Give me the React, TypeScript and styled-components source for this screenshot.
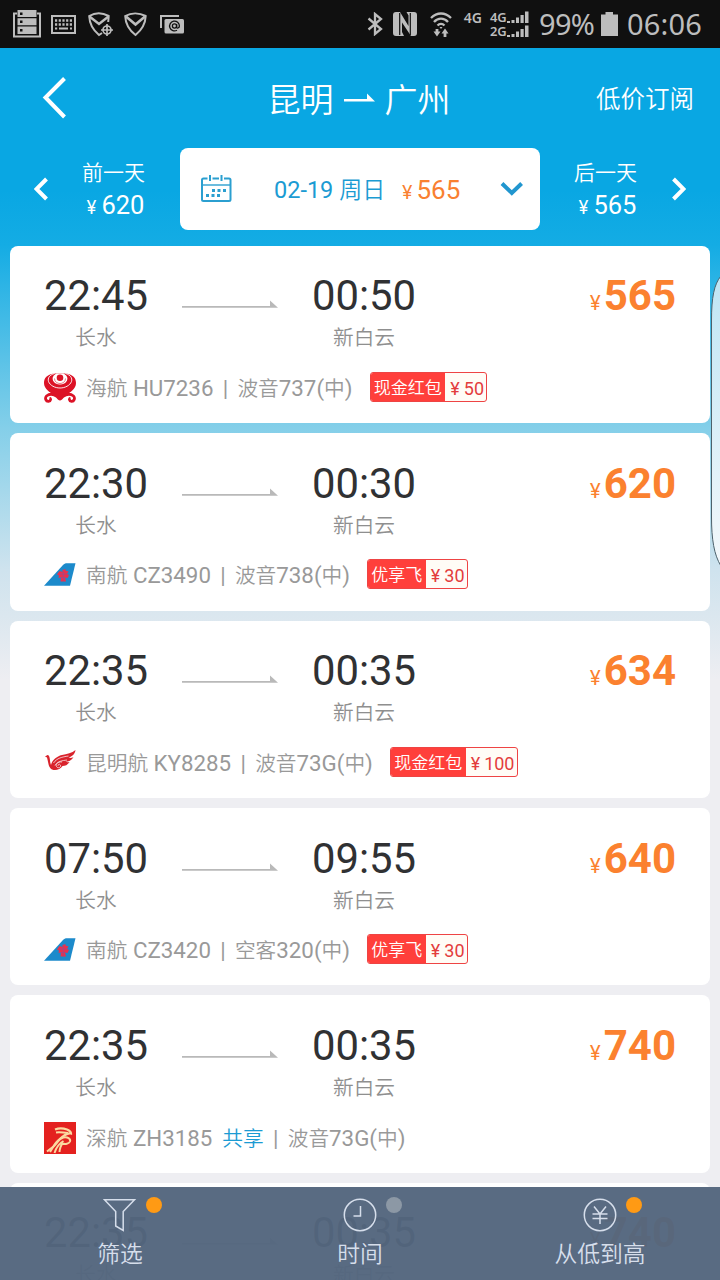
import React from "react";
import styled, { createGlobalStyle } from "styled-components";

const GlobalStyle = createGlobalStyle`
  * { box-sizing: border-box; }
  body {
    margin: 0;
    background: #eeeef2;
    font-family: Roboto, "Noto Sans CJK SC", sans-serif;
  }
  svg { display: block; flex: none; }
`;

const Screen = styled.div`
  position: relative;
  width: 720px;
  height: 1280px;
  overflow: hidden;
  display: flex;
  flex-direction: column;
  background: linear-gradient(
    180deg,
    #09a7e3 0,
    #09a7e3 190px,
    #14ace4 245px,
    #84cfe9 428px,
    #cfe3ee 570px,
    #dbe7ef 616px,
    #eeeef2 680px,
    #eeeef2 100%
  );
`;

const StatusBar = styled.header`
  flex: none;
  height: 48px;
  padding: 0 18px 0 13px;
  display: flex;
  align-items: center;
  justify-content: space-between;
  background: #101010;
  color: #bdbdbd;
`;

const StatusGroup = styled.div`
  display: flex;
  align-items: center;
`;

const StatusIcon = styled.svg<{ $gap?: number }>`
  margin-left: ${(p) => p.$gap ?? 0}px;
`;

const StatusText = styled.span<{ $gap: number; $width: number; $spacing: number }>`
  margin-left: ${(p) => p.$gap}px;
  width: ${(p) => p.$width}px;
  font: 400 29px/50px "Noto Sans", sans-serif;
  letter-spacing: ${(p) => p.$spacing}px;
  white-space: nowrap;
`;

const NetworkLabel = styled.span<{ $gap: number }>`
  margin-left: ${(p) => p.$gap}px;
  font: 600 14px/15px "Noto Sans", sans-serif;
  padding-bottom: 13px;
`;

const DualSim = styled.div`
  margin-left: 8px;
  width: 40px;
  display: flex;
  flex-direction: column;
`;

const SimRow = styled.div`
  height: 14px;
  display: flex;
  align-items: center;
  gap: 1px;
  font: 600 13px/14px "Noto Sans", sans-serif;
  letter-spacing: -0.3px;
`;

const TitleBar = styled.div`
  flex: none;
  height: 100px;
  display: grid;
  grid-template-columns: 200px 1fr 200px;
  align-items: center;
  color: #fff;
`;

const BackButton = styled.div`
  padding-left: 42px;
`;

const Route = styled.h1`
  margin: 0 2px 0 0;
  padding: 6px 0 0;
  display: flex;
  align-items: center;
  justify-content: center;
  gap: 10px;
  font-size: 33px;
  line-height: 48px;
  font-weight: 350;

  svg {
    margin-top: -6px;
  }
`;

const Subscribe = styled.span`
  padding: 4px 26px 0 0;
  text-align: right;
  font-size: 24.5px;
  line-height: 40px;
  font-weight: 350;
`;

const DateBar = styled.div`
  flex: none;
  height: 82px;
  display: grid;
  grid-template-columns: 180px 360px 180px;
  color: #fff;
`;

const DayLink = styled.div<{ $side: "prev" | "next" }>`
  display: flex;
  align-items: center;
  justify-content: space-between;
  padding: ${(p) => (p.$side === "prev" ? "0 35px 0 34px" : "0 34px 0 34px")};
`;

const DayInfo = styled.div`
  display: flex;
  flex-direction: column;
  align-items: center;
  padding-top: 3px;
`;

const DayName = styled.span`
  font-size: 21px;
  line-height: 31px;
  font-weight: 350;
`;

const DayPrice = styled.span`
  padding-left: 4px;
  display: flex;
  align-items: baseline;
  gap: 5px;
  font-size: 25.5px;
  line-height: 33px;
`;

const Yen = styled.span<{ $size: number }>`
  font-family: Inter, sans-serif;
  font-weight: 400;
  font-size: ${(p) => p.$size}px;
`;

const DateBox = styled.div`
  display: flex;
  align-items: center;
  padding: 0 16px 0 20px;
  border-radius: 8px;
  background: #fff;
`;

const DateText = styled.span`
  margin-left: 42px;
  padding-top: 2px;
  width: 128px;
  font-size: 23.5px;
  line-height: 36px;
  color: #1b9bd3;
  white-space: nowrap;
`;

const DateHan = styled.span`
  font-size: 23px;
  font-weight: 350;
`;

const DatePrice = styled.span`
  display: flex;
  align-items: baseline;
  gap: 4px;
  width: 98px;
  padding-top: 4px;
  font-size: 26px;
  line-height: 36px;
  color: #f98031;
`;

const FlightList = styled.main`
  flex: none;
  padding: 15.9px 10px 0;
  display: flex;
  flex-direction: column;
  gap: 10px;
`;

const FlightCard = styled.article`
  height: 177.4px;
  padding: 25.6px 34px 0;
  border-radius: 8px;
  background: #fff;
`;

const Schedule = styled.div`
  display: flex;
  align-items: flex-start;
`;

const Stop = styled.div`
  width: 104px;
  display: flex;
  flex-direction: column;
  align-items: center;
`;

const StopTime = styled.span`
  font-size: 41.8px;
  line-height: 50px;
  color: #303133;
`;

const StopName = styled.span`
  margin-top: 3px;
  font-size: 20.7px;
  line-height: 28px;
  font-weight: 350;
  color: #8f8f8f;
`;

const FlightArrow = styled.svg`
  margin: 28px 34px 0;
`;

const Fare = styled.div`
  margin-left: auto;
  display: flex;
  align-items: baseline;
  gap: 3px;
  font-size: 42px;
  font-weight: 700;
  line-height: 50px;
  color: #fb812f;
`;

const Carrier = styled.div`
  margin-top: 19.6px;
  height: 32px;
  display: flex;
  align-items: center;
`;

const CarrierText = styled.span`
  margin-left: 10px;
  padding-top: 1px;
  font-size: 22.3px;
  line-height: 32px;
  color: #999;
  font-weight: 400;
  white-space: pre;
`;

const Han = styled.span`
  font-size: 20.7px;
  font-weight: 350;
`;

const Shared = styled.span`
  margin-left: 10px;
  font-size: 20.7px;
  font-weight: 350;
  color: #1b9bd3;
`;

const Divider = styled.span`
  display: inline-block;
  width: 24px;
  text-align: center;
`;

const Promo = styled.div`
  margin: -2px 0 0 17.3px;
  height: 30px;
  display: flex;
  border: 1px solid #ee4444;
  border-radius: 3px;
  overflow: hidden;
  background: #fffcf6;
`;

const PromoName = styled.span`
  padding: 0 3.5px 0 3px;
  background: #ff3f3b;
  color: #fff;
  font-size: 17px;
  font-weight: 350;
  line-height: 31px;
`;

const PromoValue = styled.span`
  padding: 0 2px 0 5px;
  display: flex;
  gap: 4px;
  color: #e33d3d;
  font-size: 18px;
  line-height: 31px;
`;

const EdgeHandle = styled.svg`
  position: absolute;
  right: 0;
  top: 272px;
`;

const TabBar = styled.nav`
  position: absolute;
  left: 0;
  right: 0;
  bottom: 0;
  height: 93px;
  display: grid;
  grid-template-columns: repeat(3, 1fr);
  background: rgba(84, 102, 126, 0.97);
`;

const Tab = styled.div`
  padding-top: 11px;
  display: flex;
  flex-direction: column;
  align-items: center;
  color: #d6deeb;
`;

const TabIcon = styled.div`
  position: relative;
  width: 34px;
  height: 34px;
`;

const TabDot = styled.i<{ $on: boolean }>`
  position: absolute;
  left: 43px;
  top: -1px;
  width: 16px;
  height: 16px;
  border-radius: 50%;
  background: ${(p) => (p.$on ? "#ff9a14" : "#8c98a5")};
`;

const TabLabel = styled.span`
  margin-top: 7px;
  font-size: 22.8px;
  line-height: 32px;
  font-weight: 350;
`;

type Airline = "hu" | "cz" | "ky" | "zh";

interface Flight {
  dep: string;
  arr: string;
  price: number;
  carrier?: {
    airline: Airline;
    name: string;
    no: string;
    maker: string;
    model: string;
    shared?: boolean;
    promo?: [string, number];
  };
}

const flights: Flight[] = [
  { dep: "22:45", arr: "00:50", price: 565, carrier: { airline: "hu", name: "海航", no: "HU7236", maker: "波音", model: "737", promo: ["现金红包", 50] } },
  { dep: "22:30", arr: "00:30", price: 620, carrier: { airline: "cz", name: "南航", no: "CZ3490", maker: "波音", model: "738", promo: ["优享飞", 30] } },
  { dep: "22:35", arr: "00:35", price: 634, carrier: { airline: "ky", name: "昆明航", no: "KY8285", maker: "波音", model: "73G", promo: ["现金红包", 100] } },
  { dep: "07:50", arr: "09:55", price: 640, carrier: { airline: "cz", name: "南航", no: "CZ3420", maker: "空客", model: "320", promo: ["优享飞", 30] } },
  { dep: "22:35", arr: "00:35", price: 740, carrier: { airline: "zh", name: "深航", no: "ZH3185", maker: "波音", model: "73G", shared: true } },
  { dep: "22:35", arr: "00:35", price: 740 },
];

function AirlineLogo({ airline }: { airline: Airline }) {
  if (airline === "hu")
    return (
      <svg width="32" height="32" viewBox="0 0 32 32" fill="none">
        <path d="M10 1.500C3 2.500 0 6 0 11c0 6 6 9.500 10 12l6 4 6-4c4-2.500 10-6 10-12 0-5-3-8.500-10-9.500z" fill="#dc1226" />
        <path d="M10.500 1.500C5.500 3 3.500 6 4.500 9.500 6 13.500 11 16 16 16s10-2.500 11.500-6.500c1-3.500-1-6.500-6-8" stroke="#fff" strokeWidth="0.900" />
        <path d="M12.500 1.500C9 3 8 6 9 8.500c1 2.500 4 4 7 4s6-1.500 7-4c1-2.500 0-5.500-3.500-7z" fill="#fff" />
        <path d="M10.500 6.500c0 3.500 3 5 5.500 5s5.500-1.500 5.500-5" stroke="#e46a74" strokeWidth="0.900" />
        <circle cx="16" cy="5.700" r="3.300" fill="#dc1226" />
        <path d="M1 19.500c4 .5 7 1.500 9.500 4l-2 1.500-8-1zM31 19.500c-4 .5-7 1.500-9.500 4l2 1.500 8-1z" fill="#fff" />
        <path d="M13 24.500c-4-3-8-2.500-10.500-.5-2 2.500-.5 5.500 2 5.300 2.500-.2 2.600-2.800 1-3.200M19 24.500c4-3 8-2.500 10.500-.5 2 2.500.5 5.500-2 5.300-2.500-.2-2.600-2.800-1-3.200" stroke="#dc1226" strokeWidth="2.800" />
        <path d="M8 23h16c-4 .5-5.500 5.500-8 5.500S12 23.500 8 23z" fill="#dc1226" />
      </svg>
    );
  if (airline === "cz")
    return (
      <svg width="32" height="32" viewBox="0 0 32 32">
        <path d="M0 26.700L19 6c1.200-1.300 2.200-1.800 4-1.800h8.500L26 26.700z" fill="#1c8acb" />
        <path d="M18.500 11v2l-3-1-2.500 3.500 2 1-.5 2.500 2.500-.5-.5 4h5.500l-1-4 2.500.5 1.500-3-2-1 1.500-2.500-3-1V10z" fill="#e8314f" />
        <path d="M16 15h6.500M19.300 12.500v9M16.500 18.500h5.500" stroke="#a04a86" strokeWidth="0.900" />
      </svg>
    );
  if (airline === "ky")
    return (
      <svg width="32" height="32" viewBox="0 0 32 32" fill="none">
        <path d="M1 9.500l2.500-1.500c3 0 2 6.500 3.500 10 1-4.500 5-8.500 11-10 5-1.200 10-2 13.500-5-.5 4-3.500 6.500-7 7.800 1.500.4 3.500 0 5-.6-2 3.300-5 4.300-8 4.500 1.500.6 2.500.6 4 .2-1.500 3-4.500 4.200-7 4.200-2 3-6 4.500-9 3.800C4 22 4.500 15 3 10.500z" fill="#d9232c" />
        <path d="M9.500 16c3.500-5 8.500-6 15-7M11 18.500c3-4.500 7-4.800 12-5.500" stroke="#fff" strokeWidth="0.700" />
        <path d="M18 15c-4-.5-7 2-5.500 4.500s5 .5 4-1.300-2.800-.7-2.500.6" stroke="#fff" strokeWidth="0.700" />
      </svg>
    );
  return (
    <svg width="32" height="32" viewBox="0 0 32 32" fill="none">
      <path d="M0 0h32v32H0z" fill="#e4211f" />
      <path d="M11 7.500c4-1.500 9-1 12 0 2 .8 4 2 4 4-3-1-5.500 1-8.500 3.200-4 3-6 7.300-9 9.800L3 29.500" stroke="#fbd9a0" strokeWidth="2.200" />
      <path d="M12 10.500c4-.5 8 0 12 .5M6 30c3.500-6 7.500-13.500 13.500-14.500 4-.6 7.500 1 6.500 4-1 2.500-5 3-7.500 2M10.500 31c1.500-5 4.500-9.500 9-12M15.500 30c.3-4 1.500-7 3.500-9" stroke="#fbd9a0" strokeWidth="2" />
    </svg>
  );
}

function SignalBars() {
  return (
    <svg width="22" height="12" viewBox="0 0 22 12" fill="#bdbdbd">
      <path d="M0 10h3v2H0zM4.500 9h3v3h-3zM9 6.500h3V12H9zM13.500 4h3.200v8h-3.200zM18 0.500h3.500V12H18z" />
    </svg>
  );
}

function FlightRow({ f }: { f: Flight }) {
  const c = f.carrier;
  return (
    <FlightCard>
      <Schedule>
        <Stop>
          <StopTime>{f.dep}</StopTime>
          <StopName>长水</StopName>
        </Stop>
        <FlightArrow width="96" height="10" viewBox="0 0 96 10">
          <path d="M0 7h88V1.500l8 7.300H0z" fill="#b9b9b9" />
        </FlightArrow>
        <Stop>
          <StopTime>{f.arr}</StopTime>
          <StopName>新白云</StopName>
        </Stop>
        <Fare>
          <Yen $size={20}>¥</Yen>
          {f.price}
        </Fare>
      </Schedule>
      {c && (
        <Carrier>
          <AirlineLogo airline={c.airline} />
          <CarrierText>
            <Han>{c.name}</Han> {c.no}
            {c.shared && <Shared>共享</Shared>}
            <Divider>|</Divider>
            <Han>{c.maker}</Han>
            {c.model}(<Han>中</Han>)
          </CarrierText>
          {c.promo && (
            <Promo>
              <PromoName>{c.promo[0]}</PromoName>
              <PromoValue>
                <span>¥</span>
                <span>{c.promo[1]}</span>
              </PromoValue>
            </Promo>
          )}
        </Carrier>
      )}
    </FlightCard>
  );
}

export default function App() {
  return (
    <Screen>
      <GlobalStyle />
      <StatusBar>
        <StatusGroup>
          <StatusIcon width="28" height="28" viewBox="0 0 28 28" fill="none">
            <path d="M4 3.500H1v23h26v-23h-3" stroke="#bdbdbd" strokeWidth="2" />
            <path d="M4.500 0h19v7h-19zM4.500 8.300h19v7h-19zM4.500 16.600h19v7.400h-19z" fill="#bdbdbd" />
            <path d="M7 2.500h2.500V5H7zM7 10.500h2.500V13H7zM7 19h2.500v2.500H7z" fill="#101010" />
          </StatusIcon>
          <StatusIcon $gap={10} width="25" height="19" viewBox="0 0 25 19" fill="none">
            <path d="M1 1h23v17H1z" stroke="#bdbdbd" strokeWidth="2" />
            <path d="M4 5.500h17M4 9.500h17" stroke="#bdbdbd" strokeWidth="2.400" strokeDasharray="2.200 1.500" />
            <path d="M4 13.500h2.200M8 13.500h9M19 13.500h2" stroke="#bdbdbd" strokeWidth="2.200" />
          </StatusIcon>
          <StatusIcon $gap={12} width="25" height="25" viewBox="0 0 25 25" fill="none" stroke="#bdbdbd" strokeWidth="2">
            <path d="M14 21l-3 2C5 18 1.500 12 1.200 4c6-3.500 13-3.500 19.500 0l-.5 6" />
            <path d="M1.500 4.500L11 12l9.500-7.500" strokeWidth="2.500" />
            <circle cx="19" cy="18" r="4" strokeWidth="1.700" />
            <path d="M19 12v12M13 18h12" strokeWidth="1.700" />
          </StatusIcon>
          <StatusIcon $gap={11} width="23" height="25" viewBox="0 0 23 25" fill="none" stroke="#bdbdbd" strokeWidth="2">
            <path d="M11.500 23C5 18 1.500 12 1.200 4c6-3.500 14-3.500 20.500 0-.3 8-4 14-10.200 19z" />
            <path d="M2 4.500l9.500 8 9.500-8" strokeWidth="2.600" />
          </StatusIcon>
          <StatusIcon $gap={13} width="25" height="19" viewBox="0 0 25 19" fill="none">
            <path d="M1 13V1h18" stroke="#bdbdbd" strokeWidth="2" />
            <rect x="4.500" y="4" width="19.500" height="14.500" rx="1.500" fill="#bdbdbd" />
            <circle cx="14.500" cy="11" r="2.100" stroke="#101010" strokeWidth="1.300" />
            <path d="M16.600 9v3c0 2 2.800 1 2.800-1a4.900 4.900 0 1 0-2.400 4.200" stroke="#101010" strokeWidth="1.300" />
          </StatusIcon>
        </StatusGroup>
        <StatusGroup>
          <StatusIcon width="17" height="24" viewBox="0 0 17 24" fill="none" stroke="#bdbdbd" strokeWidth="2.300">
            <path d="M1.500 6.500L14 17l-6 5V2l6 5L1.500 17.500" />
          </StatusIcon>
          <StatusIcon $gap={9} width="24" height="24" viewBox="0 0 24 24">
            <path d="M3 0h4l8.500 14V3.500L13.500 0H21q3 0 3 3v18q0 3-3 3h-3L9 10.500V20l2 4H3q-3 0-3-3V3q0-3 3-3z" fill="#bdbdbd" />
            <path d="M6.700 1v22M17.300 1v22" stroke="#101010" strokeWidth="1.200" />
          </StatusIcon>
          <StatusIcon $gap={13} width="22" height="25" viewBox="0 0 22 25" fill="none" stroke="#bdbdbd" strokeWidth="2.300">
            <path d="M1 6c6-6 14-6 20 0M4 10c4-4.500 10-4.500 14 0M7.500 13.500c2-2 5-2 7 0" />
            <path d="M9.500 15h3L11 17z" fill="#bdbdbd" stroke="none" />
            <path d="M7 17v3M15 25v-4" strokeWidth="2.800" />
            <path d="M3.500 19.500h7L7 24.500zM11.500 21.500h7L15 16.500z" fill="#bdbdbd" stroke="none" />
          </StatusIcon>
          <NetworkLabel $gap={12}>4G</NetworkLabel>
          <DualSim>
            <SimRow>
              4G
              <SignalBars />
            </SimRow>
            <SimRow>
              2G
              <SignalBars />
            </SimRow>
          </DualSim>
          <StatusText $gap={9} $width={54} $spacing={-0.7}>99%</StatusText>
          <StatusIcon $gap={8} width="17" height="24" viewBox="0 0 17 24">
            <path d="M0 2.500h4.500V0h7.500v2.500h5V24H0z" fill="#bdbdbd" />
          </StatusIcon>
          <StatusText $gap={9} $width={75} $spacing={0.2}>06:06</StatusText>
        </StatusGroup>
      </StatusBar>

      <TitleBar>
        <BackButton>
          <svg width="26" height="42" viewBox="0 0 26 42" fill="none">
            <path d="M22.500 1.500L3.500 20.500l19 19.500" stroke="#fff" strokeWidth="4" />
          </svg>
        </BackButton>
        <Route>
          <span>昆明</span>
          <svg width="31" height="10" viewBox="0 0 31 10">
            <path d="M0 6h23V0.500l8 8H0z" fill="#fff" />
          </svg>
          <span>广州</span>
        </Route>
        <Subscribe>低价订阅</Subscribe>
      </TitleBar>

      <DateBar>
        <DayLink $side="prev">
          <svg width="14" height="24" viewBox="0 0 14 24" fill="none">
            <path d="M12.500 2L2.500 12l10 10" stroke="#fff" strokeWidth="4" />
          </svg>
          <DayInfo>
            <DayName>前一天</DayName>
            <DayPrice>
              <Yen $size={18}>¥</Yen>620
            </DayPrice>
          </DayInfo>
        </DayLink>
        <DateBox>
          <svg width="32" height="28" viewBox="0 0 32 28" fill="none" stroke="#2b9fd0">
            <rect x="2" y="3.500" width="28.500" height="22.500" rx="1.500" strokeWidth="2" />
            <path d="M2 10h28" strokeWidth="1.400" />
            <path d="M10 0.500v5M21.500 0.500v5" stroke="#fff" strokeWidth="5" />
            <path d="M10 0v6M21.500 0v6" strokeWidth="2" />
            <path d="M12 15.500h15M6 20.500h15" strokeWidth="3" strokeDasharray="3 2.500" />
          </svg>
          <DateText>
            02-19 <DateHan>周日</DateHan>
          </DateText>
          <DatePrice>
            <Yen $size={19}>¥</Yen>565
          </DatePrice>
          <svg width="24" height="16" viewBox="0 0 24 16" fill="none">
            <path d="M2 2.500l9.800 9.500 9.800-9.500" stroke="#2196cf" strokeWidth="4" />
          </svg>
        </DateBox>
        <DayLink $side="next">
          <DayInfo>
            <DayName>后一天</DayName>
            <DayPrice>
              <Yen $size={18}>¥</Yen>565
            </DayPrice>
          </DayInfo>
          <svg width="14" height="24" viewBox="0 0 14 24" fill="none">
            <path d="M1.500 2l10 10-10 10" stroke="#fff" strokeWidth="4" />
          </svg>
        </DayLink>
      </DateBar>

      <FlightList>
        {flights.map((f, i) => (
          <FlightRow key={i} f={f} />
        ))}
      </FlightList>

      <EdgeHandle width="10" height="296" viewBox="0 0 10 296">
        <defs>
          <linearGradient id="edge" x1="0" y1="0" x2="0" y2="1">
            <stop offset="0" stopColor="#bfe5f4" />
            <stop offset="1" stopColor="#f3f8fb" />
          </linearGradient>
        </defs>
        <path d="M11 4C4 12 1.500 26 1.500 48V245c0 22 2.500 38 9.500 49z" fill="url(#edge)" stroke="#4d626c" strokeWidth="1" />
      </EdgeHandle>

      <TabBar>
        <Tab>
          <TabIcon>
            <svg width="34" height="34" viewBox="0 0 34 34" fill="none" stroke="#d6deeb" strokeWidth="1.500">
              <path d="M1.500 1.800h30L20.200 13.500v19L12.700 28V13.500z" />
            </svg>
            <TabDot $on />
          </TabIcon>
          <TabLabel>筛选</TabLabel>
        </Tab>
        <Tab>
          <TabIcon>
            <svg width="34" height="34" viewBox="0 0 34 34" fill="none" stroke="#d6deeb" strokeWidth="1.500">
              <circle cx="17" cy="17" r="15.700" />
              <path d="M17.500 8v10H10.500" />
            </svg>
            <TabDot $on={false} />
          </TabIcon>
          <TabLabel>时间</TabLabel>
        </Tab>
        <Tab>
          <TabIcon>
            <svg width="34" height="34" viewBox="0 0 34 34" fill="none" stroke="#d6deeb" strokeWidth="1.500">
              <circle cx="17" cy="17" r="15.700" />
              <path d="M11 8.500l6 7.500 6-7.500M17 16v10M9.500 16h15M9.500 20.500h15" />
            </svg>
            <TabDot $on />
          </TabIcon>
          <TabLabel>从低到高</TabLabel>
        </Tab>
      </TabBar>
    </Screen>
  );
}
